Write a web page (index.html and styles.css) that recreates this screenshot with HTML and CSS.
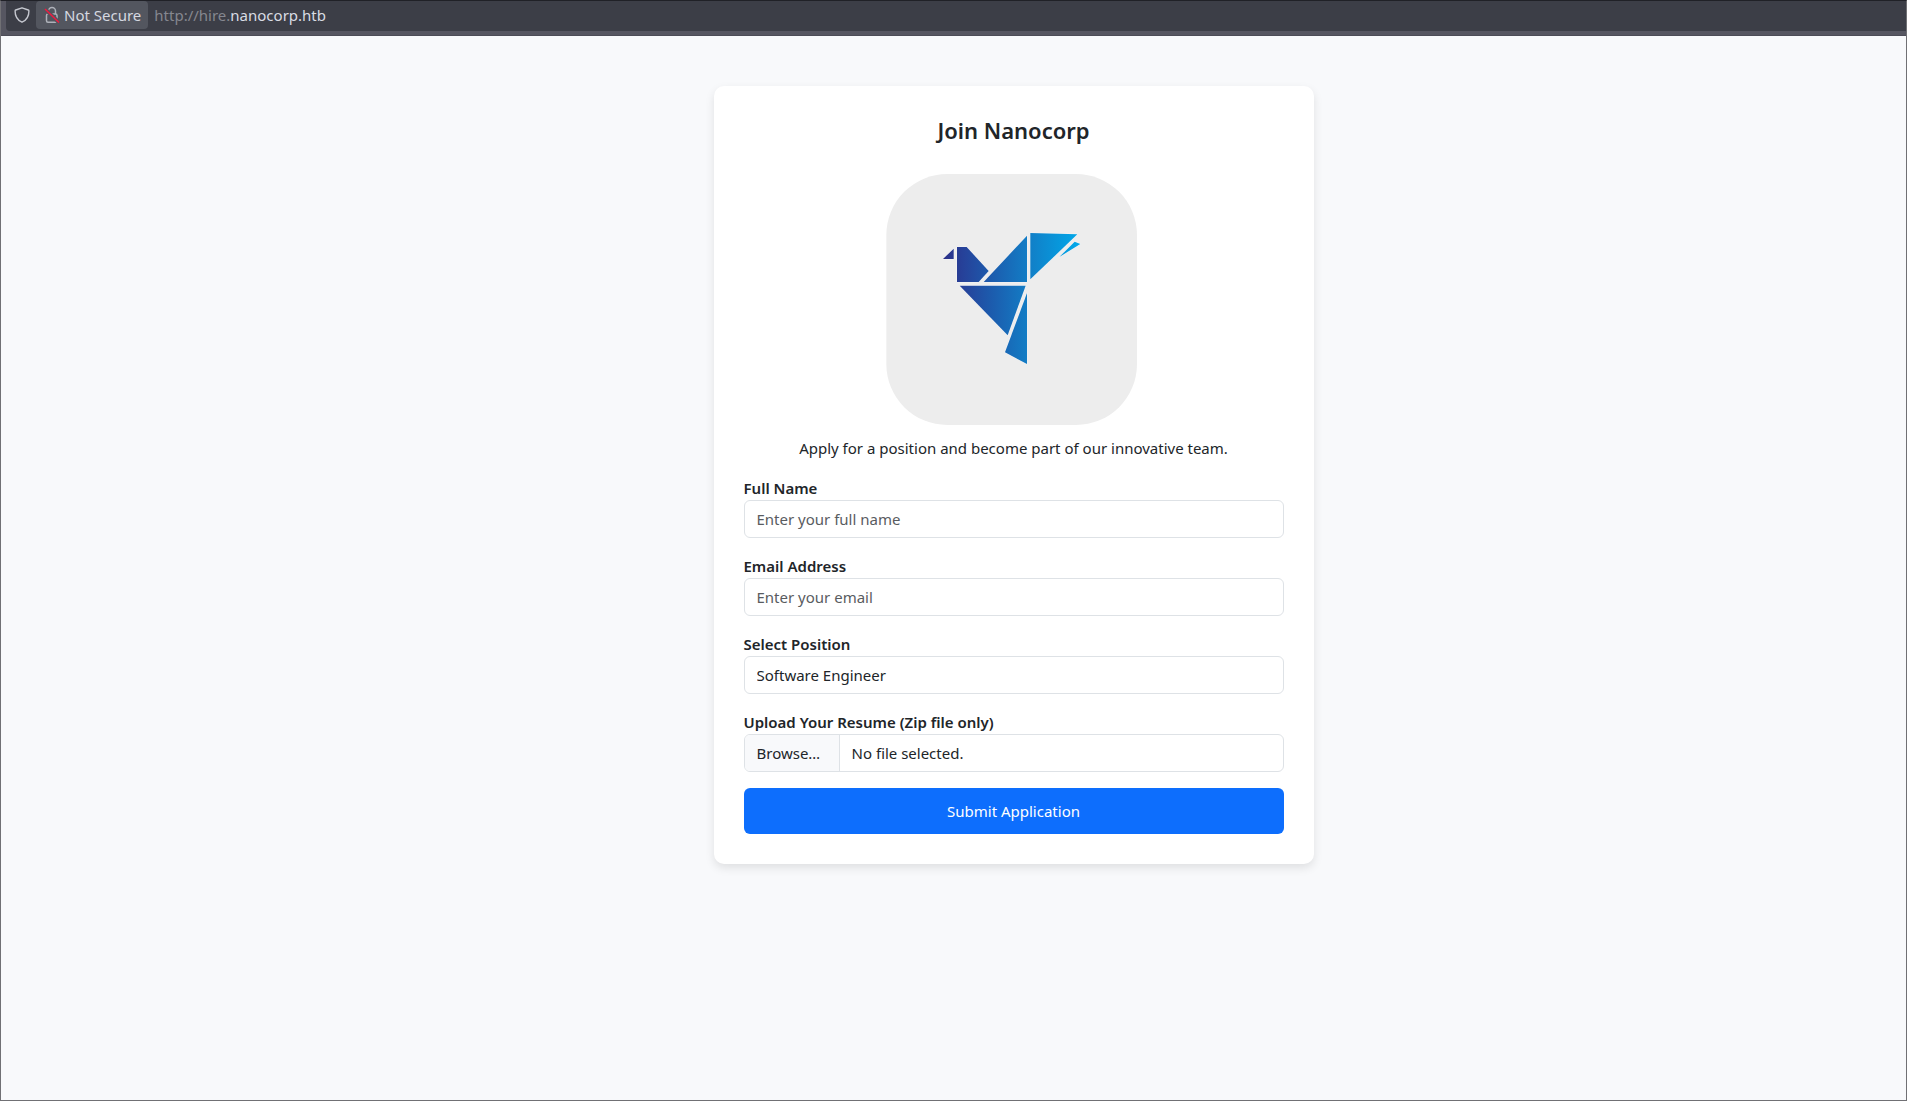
FILE: index.html
```html
<!DOCTYPE html>
<html lang="en">
<head>
  <meta charset="UTF-8">
  <meta name="viewport" content="width=device-width, initial-scale=1.0">
  <title>Join Nanocorp</title>
  <link rel="stylesheet" href="styles.css">
</head>
<body>
  <header class="toolbar">
    <div class="url-bar">
      <button type="button" class="shield-btn" aria-label="Tracking protection">
        <svg width="16" height="16" viewBox="0 0 16 16" fill="none" stroke="#c5c7cf" stroke-width="1.4" stroke-linejoin="round">
          <path d="M8 0.8 L14.3 3 Q14.9 3.2 14.9 3.9 C15 8.8 12.6 13 8 15.2 C3.4 13 1 8.8 1.1 3.9 Q1.1 3.2 1.7 3 Z"/>
        </svg>
      </button>
      <button type="button" class="security-btn">
        <svg width="16" height="18" viewBox="0 0 16 18" fill="none">
          <path d="M4.5 8 V5 A3.5 3.5 0 0 1 11.5 5 V8" stroke="#aeb1b9" stroke-width="1.5"/>
          <rect x="2.5" y="8" width="10.5" height="8.2" rx="1.5" stroke="#aeb1b9" stroke-width="1.5"/>
          <path d="M1 3 L15 16.5" stroke="#53565f" stroke-width="4"/>
          <path d="M1 3 L15 16.5" stroke="#f0193f" stroke-width="1.5"/>
        </svg>
        Not Secure
      </button>
      <div class="url"><span class="url-dim">http://hire.</span>nanocorp.htb</div>
    </div>
  </header>

  <main>
    <section class="card">
      <h2>Join Nanocorp</h2>
      <svg class="logo" viewBox="12 6 840 822" role="img" aria-label="Nanocorp logo">
        <defs>
          <linearGradient id="bird" gradientUnits="userSpaceOnUse" x1="219" y1="300" x2="631" y2="300">
            <stop offset="0" stop-color="#2b2f87"/>
            <stop offset="0.15" stop-color="#26429a"/>
            <stop offset="0.35" stop-color="#1c5bad"/>
            <stop offset="0.6" stop-color="#137bc4"/>
            <stop offset="1" stop-color="#00a9ea"/>
          </linearGradient>
        </defs>
        <rect x="49" y="42" width="752" height="753" rx="183" fill="#ededed"/>
        <g fill="url(#bird)" stroke="#f7f8fa" stroke-width="2" paint-order="stroke">
          <path d="M219 297 L251 266 V297 Z"/>
          <path d="M261 261 H290 L356 333 L326 366 H261 Z"/>
          <path d="M341 366 L471 227 V366 Z"/>
          <path d="M481 219 L622 223 L481 358 Z"/>
          <path d="M568 291 L614 245 L631 252 Z"/>
          <path d="M269 377 H467 L413 526 Z"/>
          <path d="M471 399 V612 L405 577 Z"/>
        </g>
      </svg>
      <p>Apply for a position and become part of our innovative team.</p>

      <form id="apply-form">
        <div class="form-group">
          <label for="name">Full Name</label>
          <input type="text" class="form-control" id="name" name="name" placeholder="Enter your full name" required>
        </div>

        <div class="form-group">
          <label for="email">Email Address</label>
          <input type="email" class="form-control" id="email" name="email" placeholder="Enter your email" required>
        </div>

        <div class="form-group">
          <label for="position">Select Position</label>
          <select class="form-control" id="position" name="position">
            <option>Software Engineer</option>
          </select>
        </div>

        <div class="form-group">
          <label for="resume">Upload Your Resume (Zip file only)</label>
          <div class="form-control file-control">
            <span class="file-button">Browse…</span>
            <span class="file-name">No file selected.</span>
            <input type="file" id="resume" name="resume" accept=".zip" required>
          </div>
        </div>

        <button type="submit" class="btn">Submit Application</button>
      </form>
    </section>
  </main>
</body>
</html>
```

FILE: styles.css
```css
:root {
  --background-color: #f8f9fb;
  --text-color: #212529;
  --border-color: #dee2e6;
  --primary: #0d6efd;
  --toolbar: #565661;
  --url-bar: #3c3e47;
}

* {
  box-sizing: border-box;
}

body {
  margin: 0;
  min-height: 100vh;
  font-family: 'Noto Sans', sans-serif;
  font-size: 15px;
  line-height: 24px;
  color: var(--text-color);
  background-color: var(--background-color);
  border: 1px solid #707074;
  border-top-color: #202127;
}

button, input, select {
  font: inherit;
}

/* Browser bar */
.toolbar {
  height: 35px;
  padding: 0 0 5px 5px;
  background-color: var(--toolbar);
  border-bottom: 1px solid #4c4c57;
}

.url-bar {
  display: flex;
  align-items: center;
  height: 30px;
  padding: 0 0 2px 8px;
  background-color: var(--url-bar);
  border-radius: 0 0 0 4px;
}

.toolbar button {
  display: flex;
  align-items: center;
  border: none;
  color: #d5d8e0;
  background: none;
  cursor: pointer;
}

.shield-btn {
  padding: 0;
}

.toolbar .security-btn {
  gap: 4px;
  height: 28px;
  margin: 0 6px;
  padding: 0 7px 0 8px;
  background-color: #53565f;
  border-radius: 4px;
}

.url {
  color: #d9dce4;
}

.url-dim {
  color: #85878f;
}

/* Application form */
main {
  padding: 50px 0 50px 120px;
}

.card {
  max-width: 600px;
  margin: 0 auto;
  padding: 30px;
  background: white;
  border-radius: 10px;
  box-shadow: 0 4px 10px rgba(0, 0, 0, 0.1);
}

.card h2 {
  margin: 0 0 18px;
  font-size: 22px;
  line-height: 28px;
  font-weight: 600;
  text-align: center;
}

.logo {
  display: block;
  width: 280px;
  margin: 0 auto;
}

.card p {
  margin: 0 0 16px;
  text-align: center;
}

.form-group {
  margin-bottom: 16px;
}

label {
  display: block;
  font-weight: 600;
}

.form-control {
  display: block;
  width: 100%;
  height: 38px;
  padding: 6px 12px;
  color: var(--text-color);
  background-color: white;
  border: 1px solid var(--border-color);
  border-radius: 6px;
  appearance: none;
}

.form-control::placeholder {
  color: #595c5f;
  opacity: 1;
}

.form-control:focus {
  border-color: #86b7fe;
  outline: none;
}

.file-control {
  display: flex;
  position: relative;
  padding: 0;
  overflow: hidden;
}

.file-button {
  min-width: 95px;
  padding: 6px 12px;
  background-color: var(--background-color);
  border-right: 1px solid var(--border-color);
}

.file-name {
  padding: 6px 12px;
}

/* Real file input lies over the styled control */
.file-control input {
  position: absolute;
  inset: 0;
  width: 100%;
  opacity: 0;
  cursor: pointer;
}

.btn {
  display: block;
  width: 100%;
  padding: 11px 12px;
  color: white;
  background-color: var(--primary);
  border: none;
  border-radius: 6px;
  cursor: pointer;
}

.btn:hover {
  background-color: #0b5ed7;
}
```
